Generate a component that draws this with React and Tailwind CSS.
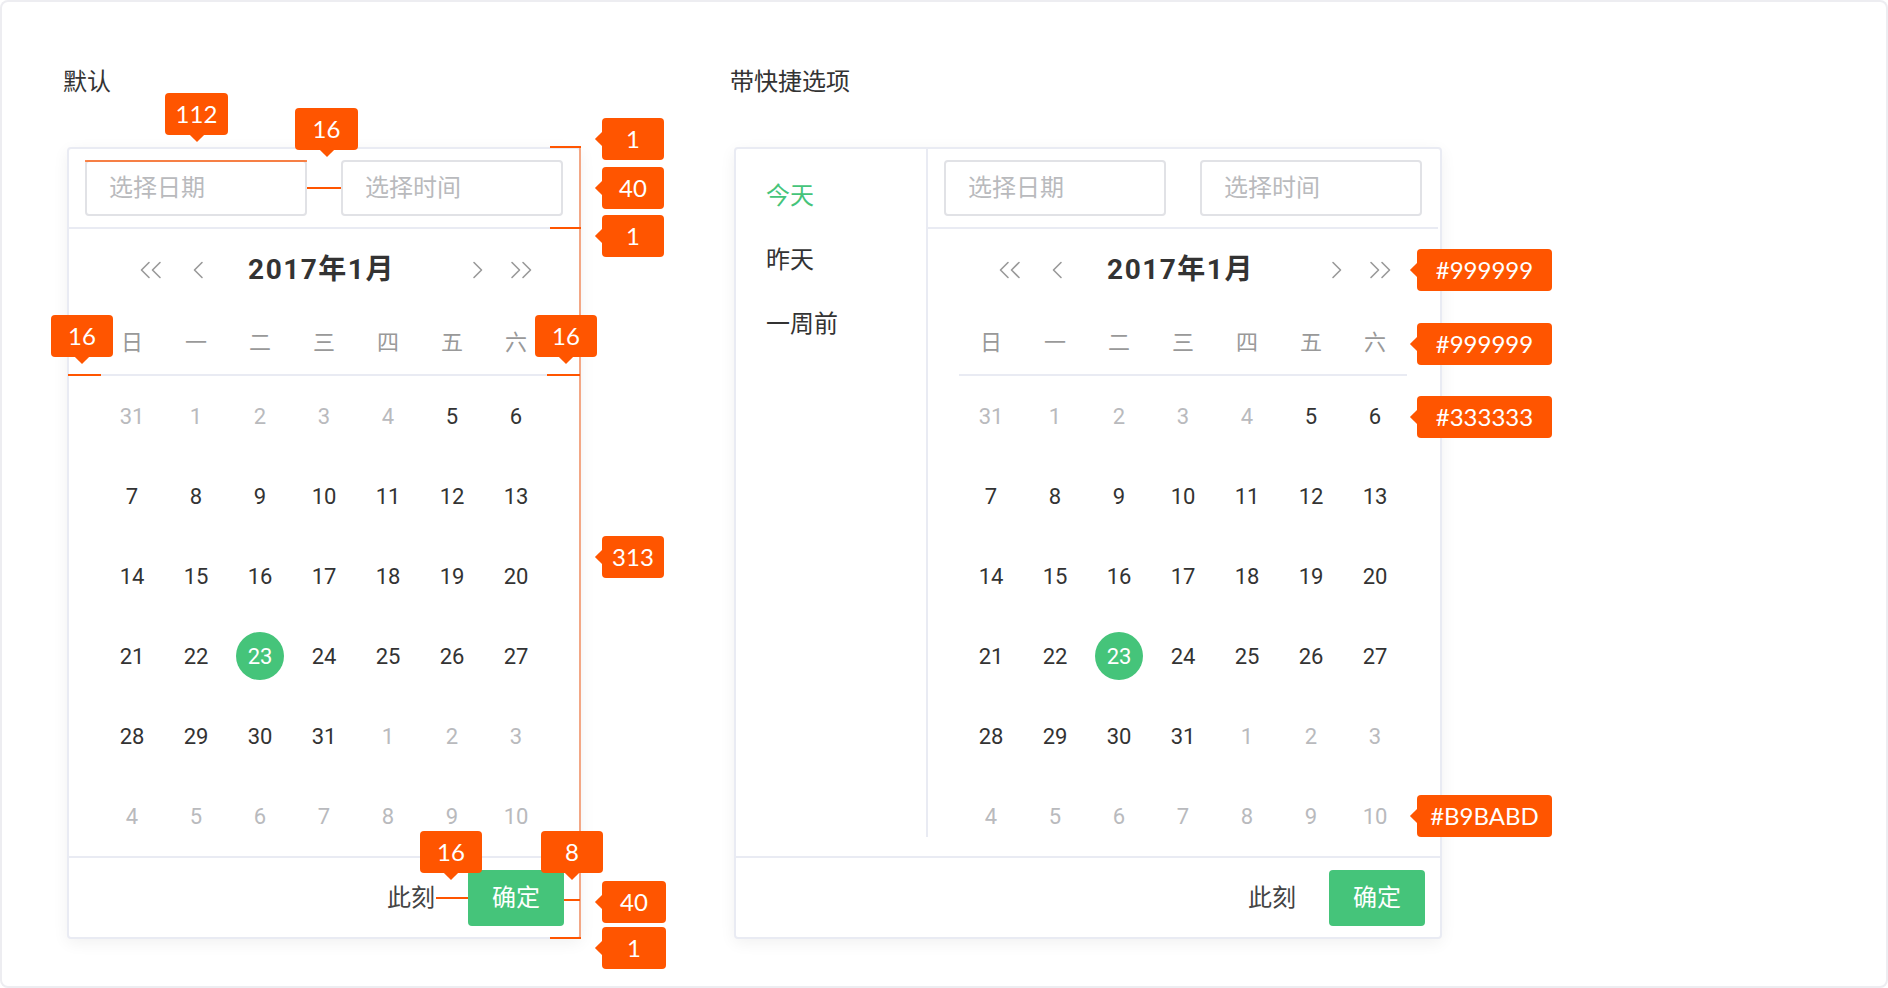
import React from 'react';

const rows = [
    [31, 1, 2, 3, 4, 5, 6],
    [7, 8, 9, 10, 11, 12, 13],
    [14, 15, 16, 17, 18, 19, 20],
    [21, 22, 23, 24, 25, 26, 27],
    [28, 29, 30, 31, 1, 2, 3],
    [4, 5, 6, 7, 8, 9, 10],
];
const weekdays = ['日', '一', '二', '三', '四', '五', '六'];

const isMuted = (r, c) => (r === 0 && c < 5) || (r === 4 && c > 3) || r === 5;

const Chevron = ({ right }) => (
    <svg width="12" height="18" viewBox="0 0 12 18" className={right ? 'rotate-180' : ''}>
        <path d="M10 1.5 L2.5 9 L10 16.5" fill="none" stroke="#999999" strokeWidth="1.6" strokeLinecap="round" strokeLinejoin="round" />
    </svg>
);

const DoubleChevron = ({ right }) => (
    <svg width="24" height="18" viewBox="0 0 24 18" className={right ? 'rotate-180' : ''}>
        <path d="M10 1.5 L2.5 9 L10 16.5" fill="none" stroke="#999999" strokeWidth="1.6" strokeLinecap="round" strokeLinejoin="round" />
        <path d="M21 1.5 L13.5 9 L21 16.5" fill="none" stroke="#999999" strokeWidth="1.6" strokeLinecap="round" strokeLinejoin="round" />
    </svg>
);

const Panel = () => (
    <div className="w-[510px] flex flex-col">
        {/* Inputs */}
        <div className="h-[80px] border-b-2 border-[#e9ebf3] flex items-center px-[16px] gap-[34px]">
            <div className="w-[222px] h-[56px] border-2 border-[#e1e2e6] rounded-[4px] flex items-center pl-[22px] text-[24px] text-[#b9babd]">选择日期</div>
            <div className="w-[222px] h-[56px] border-2 border-[#e1e2e6] rounded-[4px] flex items-center pl-[22px] text-[24px] text-[#b9babd]">选择时间</div>
        </div>

        {/* Month nav */}
        <div className="h-[82px] flex items-center pl-[70px]">
            <DoubleChevron />
            <div className="ml-[29px] flex"><Chevron /></div>
            <div className="ml-[45px] w-[145px] flex justify-center whitespace-nowrap text-[28px] font-bold tracking-[1.5px] text-[#333333] leading-none">2017年1月</div>
            <div className="ml-[78px] flex"><Chevron right /></div>
            <div className="ml-[25px] flex"><DoubleChevron right /></div>
        </div>

        {/* Weekdays */}
        <div className="h-[65px] mx-[31px] border-b-2 border-[#e9ebf3] grid grid-cols-7">
            {weekdays.map((w) => (
                <div key={w} className="flex items-center justify-center text-[22px] text-[#999999]">{w}</div>
            ))}
        </div>

        {/* Days */}
        <div className="mx-[31px] grid grid-cols-7">
            {rows.map((row, r) =>
                row.map((d, c) => (
                    <div key={r + '-' + c} className="h-[80px] flex items-center justify-center text-[22px]">
                        {r === 3 && c === 2 ? (
                            <span className="w-[48px] h-[48px] rounded-full bg-[#45c47a] text-white flex items-center justify-center">{d}</span>
                        ) : (
                            <span className={isMuted(r, c) ? 'text-[#b9babd]' : 'text-[#333333]'}>{d}</span>
                        )}
                    </div>
                ))
            )}
        </div>
    </div>
);

const Footer = () => (
    <div className="h-[81px] border-t-2 border-[#e9ebf3] flex items-center justify-end pr-[15px] gap-[33px]">
        <span className="text-[24px] text-[#444444]">此刻</span>
        <button className="w-[96px] h-[56px] rounded-[4px] bg-[#45c47a] text-white text-[24px]">确定</button>
    </div>
);

const Badge = ({ className, text, down }) => (
    <div className={`absolute h-[42px] rounded-[4px] bg-[#ff5500] text-white text-[24px] font-[Lato,sans-serif] flex items-center justify-center ${className}`}>
        {down ? (
            <div className="absolute left-1/2 -bottom-[5px] -translate-x-1/2 w-[10px] h-[10px] rotate-45 bg-[#ff5500]" />
        ) : (
            <div className="absolute -left-[5px] top-1/2 -translate-y-1/2 w-[10px] h-[10px] rotate-45 bg-[#ff5500]" />
        )}
        <span className="relative">{text}</span>
    </div>
);

const App = () => {
    return (
        <div className="relative w-[1888px] h-[988px] overflow-hidden bg-white rounded-[8px] shadow-[inset_0_0_0_2px_#ededf1] font-[Roboto,'Noto_Sans_CJK_SC',sans-serif]">
            <div className="flex pl-[67px] pt-[66px] gap-[153px]">
                {/* Default */}
                <div className="flex flex-col">
                    <h2 className="-ml-[4px] text-[24px] leading-[32px] text-[#333333]">默认</h2>
                    <div className="mt-[49px] w-[514px] border-2 border-[#e9ebf3] rounded-[4px] bg-white shadow-[0_4px_16px_rgba(0,0,0,0.06)] flex flex-col">
                        <Panel />
                        <Footer />
                    </div>
                </div>

                {/* With shortcuts */}
                <div className="flex flex-col">
                    <h2 className="-ml-[4px] text-[24px] leading-[32px] text-[#333333]">带快捷选项</h2>
                    <div className="mt-[49px] w-[708px] border-2 border-[#e9ebf3] rounded-[4px] bg-white shadow-[0_4px_16px_rgba(0,0,0,0.06)] flex flex-col">
                        <div className="flex items-start">
                            <div className="w-[192px] h-[688px] border-r-2 border-[#e9ebf3] flex flex-col pl-[30px] pt-[31px] gap-[32px] text-[24px] leading-[32px]">
                                <span className="text-[#45c47a]">今天</span>
                                <span className="text-[#333333]">昨天</span>
                                <span className="text-[#333333]">一周前</span>
                            </div>
                            <Panel />
                        </div>
                        <Footer />
                    </div>
                </div>
            </div>

            {/* Measurement lines */}
            <div className="absolute left-[85px] top-[160px] w-[222px] h-[2px] bg-[#ff5500]/70" />
            <div className="absolute left-[307px] top-[187px] w-[34px] h-[2px] bg-[#ff5500]" />
            <div className="absolute left-[550px] top-[146px] w-[31px] h-[2px] bg-[#ff5500]" />
            <div className="absolute left-[550px] top-[227px] w-[31px] h-[2px] bg-[#ff5500]" />
            <div className="absolute left-[550px] top-[937px] w-[31px] h-[2px] bg-[#ff5500]" />
            <div className="absolute left-[579px] top-[147px] w-[2px] h-[792px] bg-[#ff5500]/45" />
            <div className="absolute left-[68px] top-[374px] w-[33px] h-[2px] bg-[#ff5500]" />
            <div className="absolute left-[547px] top-[374px] w-[33px] h-[2px] bg-[#ff5500]" />
            <div className="absolute left-[436px] top-[897px] w-[32px] h-[2px] bg-[#ff5500]" />
            <div className="absolute left-[564px] top-[899px] w-[16px] h-[2px] bg-[#ff5500]" />

            {/* Annotations */}
            <Badge className="left-[165px] top-[93px] w-[63px]" text="112" down />
            <Badge className="left-[295px] top-[108px] w-[63px]" text="16" down />
            <Badge className="left-[602px] top-[118px] w-[62px]" text="1" />
            <Badge className="left-[602px] top-[167px] w-[62px]" text="40" />
            <Badge className="left-[602px] top-[215px] w-[62px]" text="1" />
            <Badge className="left-[51px] top-[315px] w-[62px]" text="16" down />
            <Badge className="left-[535px] top-[315px] w-[62px]" text="16" down />
            <Badge className="left-[602px] top-[536px] w-[62px]" text="313" />
            <Badge className="left-[420px] top-[831px] w-[62px]" text="16" down />
            <Badge className="left-[541px] top-[831px] w-[62px]" text="8" down />
            <Badge className="left-[602px] top-[881px] w-[64px]" text="40" />
            <Badge className="left-[602px] top-[927px] w-[64px]" text="1" />
            <Badge className="left-[1417px] top-[249px] w-[135px]" text="#999999" />
            <Badge className="left-[1417px] top-[323px] w-[135px]" text="#999999" />
            <Badge className="left-[1417px] top-[396px] w-[135px]" text="#333333" />
            <Badge className="left-[1417px] top-[795px] w-[135px]" text="#B9BABD" />
        </div>
    );
};

export default App;
